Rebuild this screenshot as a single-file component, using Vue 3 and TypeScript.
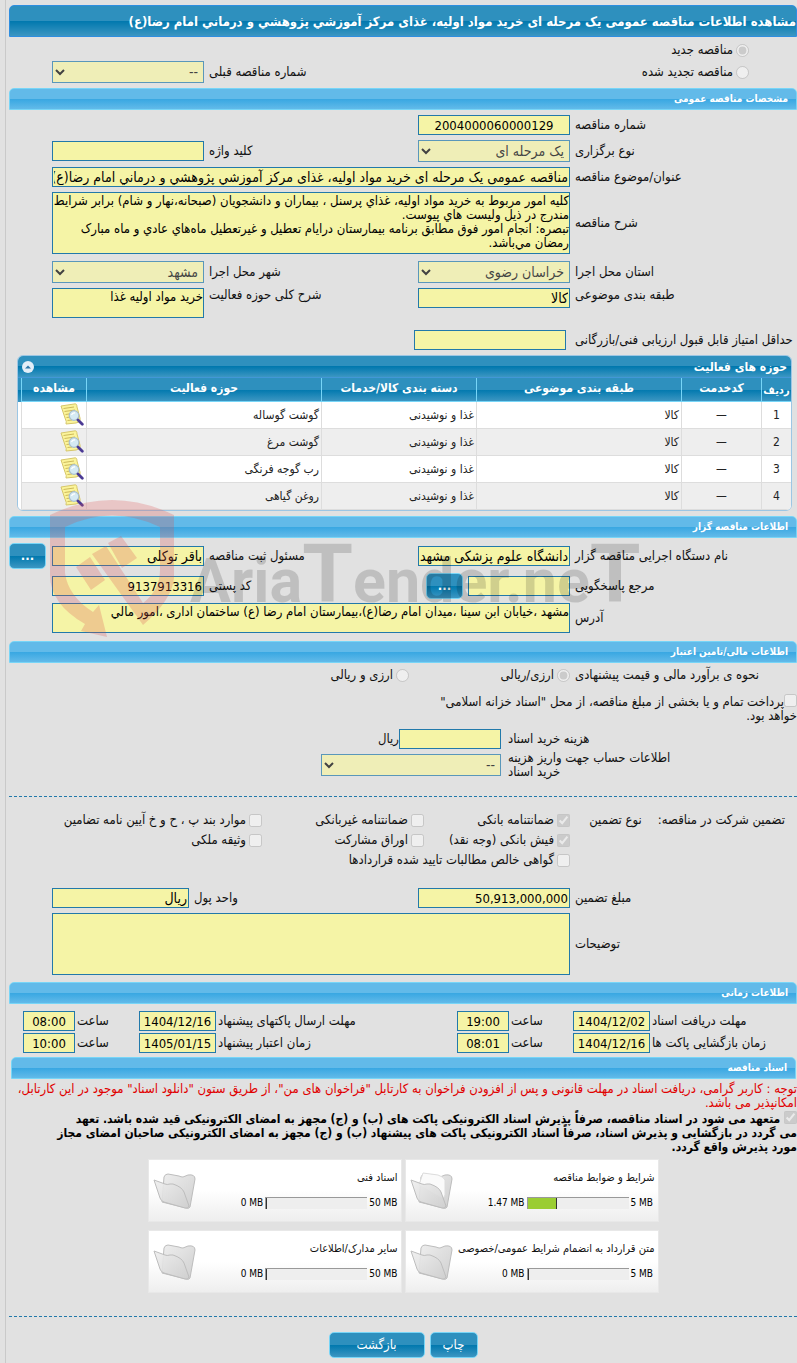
<script setup lang="ts">
interface Activity {
  id: number
  code: string
  subject: string
  category: string
  field: string
}
interface Doc {
  title: string
  used: number
  max: number
  filled: boolean
}
interface Deadline {
  key: string
  label: string
  date: string
  hour: string
}

const title =
  'مشاهده اطلاعات مناقصه عمومی یک مرحله ای خرید مواد اولیه، غذای مرکز آموزشي پژوهشي و درماني امام رضا(ع)'
const subject =
  'مناقصه عمومی یک مرحله ای خرید مواد اولیه، غذای مرکز آموزشي پژوهشي و درماني امام رضا(ع)'
const description = [
  'کلیه امور مربوط به خرید مواد اولیه، غذاي پرسنل ، بیماران و دانشجویان (صبحانه،نهار و شام) برابر شرایط',
  'مندرج در ذیل ولیست هاي پیوست.',
  'تبصره: انجام امور فوق مطابق برنامه بیمارستان درایام تعطیل و غیرتعطیل ماه‌هاي عادي و ماه مبارک',
  'رمضان مي‌باشد.',
].join('\n')
const scope = 'خرید مواد اولیه غذا'
const address =
  'مشهد ،خیابان ابن سینا ،میدان امام رضا(ع)،بیمارستان امام رضا (ع) ساختمان اداری ،امور مالي'

const activities: Activity[] = ['گوشت گوساله', 'گوشت مرغ', 'رب گوجه فرنگی', 'روغن گیاهی'].map(
  (field, i) => ({ id: i + 1, code: '—', subject: 'کالا', category: 'غذا و نوشیدنی', field }),
)

const deadlines: Deadline[] = [
  { key: 'docs', label: 'مهلت دریافت اسناد', date: '1404/12/02', hour: '19:00' },
  { key: 'send', label: 'مهلت ارسال پاکتهای پیشنهاد', date: '1404/12/16', hour: '08:00' },
  { key: 'open', label: 'زمان بازگشایی پاکت ها', date: '1404/12/16', hour: '08:01' },
  { key: 'valid', label: 'زمان اعتبار پیشنهاد', date: '1405/01/15', hour: '10:00' },
]

const docs: Doc[] = [
  { title: 'شرایط و ضوابط مناقصه', used: 1.47, max: 5, filled: true },
  { title: 'اسناد فنی', used: 0, max: 50, filled: false },
  { title: 'متن قرارداد به انضمام شرایط عمومی/خصوصی', used: 0, max: 5, filled: false },
  { title: 'سایر مدارک/اطلاعات', used: 0, max: 50, filled: false },
]
</script>

<template>
  <main class="page" dir="rtl">
    <h1 class="title">{{ title }}</h1>

    <div class="kind">
      <label class="opt kind-opt"><input type="radio" name="kind" checked disabled />مناقصه جدید</label>
      <div class="grid">
        <label class="opt kind-opt span2"><input type="radio" name="kind" disabled />مناقصه تجدید شده</label>
        <label class="lbl" for="prev">شماره مناقصه قبلی</label>
        <select id="prev" disabled><option>--</option></select>
      </div>
    </div>

    <h2 class="section">مشخصات مناقصه عمومی</h2>
    <div class="body">
      <div class="grid">
        <label class="lbl" for="num">شماره مناقصه</label>
        <input id="num" class="num center" type="text" value="2004000060000129" readonly />
      </div>
      <div class="grid">
        <label class="lbl" for="type">نوع برگزاری</label>
        <select id="type" disabled><option>یک مرحله ای</option></select>
        <label class="lbl" for="kw">کلید واژه</label>
        <input id="kw" type="text" readonly />
      </div>
      <div class="grid">
        <label class="lbl" for="subj">عنوان/موضوع مناقصه</label>
        <input id="subj" class="span3" type="text" :value="subject" readonly />
      </div>
      <div class="grid">
        <label class="lbl" for="desc">شرح مناقصه</label>
        <textarea id="desc" class="span3 tall" :value="description" readonly></textarea>
      </div>
      <div class="grid place">
        <label class="lbl" for="prov">استان محل اجرا</label>
        <select id="prov" disabled><option>خراسان رضوی</option></select>
        <label class="lbl" for="city">شهر محل اجرا</label>
        <select id="city" disabled><option>مشهد</option></select>
      </div>
      <div class="grid top">
        <label class="lbl" for="cls">طبقه بندی موضوعی</label>
        <input id="cls" type="text" value="کالا" readonly />
        <label class="lbl" for="act">شرح کلی حوزه فعالیت</label>
        <textarea id="act" class="short" :value="scope" readonly></textarea>
      </div>
      <div class="grid score">
        <label class="lbl" for="score">حداقل امتیاز قابل قبول ارزیابی فنی/بازرگانی</label>
        <div class="score-field"><input id="score" type="text" readonly /></div>
      </div>

      <div class="panel">
        <div class="panel-head">
          <span>حوزه های فعالیت</span>
          <button class="collapse" type="button" aria-label="بستن">
            <svg viewBox="0 0 12 12" width="12" height="12"><circle cx="6" cy="6" r="6" fill="#e3eef8" /><path d="M3 7.5 L6 4.5 L9 7.5 Z" fill="#2d76a8" /></svg>
          </button>
        </div>
        <div class="panel-body">
          <table>
            <colgroup>
              <col class="c1" /><col class="c2" /><col class="c3" /><col class="c4" /><col /><col class="c6" />
            </colgroup>
            <thead>
              <tr>
                <th class="idx">ردیف</th>
                <th>کدخدمت</th>
                <th>طبقه بندی موضوعی</th>
                <th>دسته بندی کالا/خدمات</th>
                <th>حوزه فعالیت</th>
                <th>مشاهده</th>
              </tr>
            </thead>
            <tbody>
              <tr v-for="a in activities" :key="a.id">
                <td class="mid">{{ a.id }}</td>
                <td class="mid">{{ a.code }}</td>
                <td>{{ a.subject }}</td>
                <td>{{ a.category }}</td>
                <td>{{ a.field }}</td>
                <td>
                  <a class="view" href="#" aria-label="مشاهده">
                    <svg viewBox="0 0 24 24" width="24" height="24">
                      <path d="M1 3 L14 1 Q17 0 17 4 L20 15 Q21 19 16 20 L6 21 Q7 19 5 15 Z" fill="#fbf49a" stroke="#d6c66a" stroke-width="1" />
                      <path d="M3.5 5.5 L14 4 M4.5 8.5 L15 7 M5.5 11.5 L12 10.5 M6.5 14.5 L11 14 M7.5 17.5 L12 17" stroke="#cdb95a" stroke-width="1" fill="none" />
                      <circle cx="14" cy="12.5" r="4.8" fill="#d3e9f8" fill-opacity="0.95" stroke="#a9bfce" stroke-width="1.2" />
                      <path d="M11.5 12 Q12.5 9.5 15 10" stroke="#ffffff" stroke-width="1.3" fill="none" />
                      <path d="M18 17 L22.3 21.3" stroke="#4b3a94" stroke-width="2.8" stroke-linecap="round" />
                    </svg>
                  </a>
                </td>
              </tr>
            </tbody>
          </table>
        </div>
      </div>
    </div>

    <h2 class="section owner">اطلاعات مناقصه گزار</h2>
    <div class="owner-body">
      <div class="grid">
        <label class="lbl" for="org">نام دستگاه اجرایی مناقصه گزار</label>
        <input id="org" type="text" value="دانشگاه علوم پزشکی مشهد" readonly />
        <label class="lbl" for="reg">مسئول ثبت مناقصه</label>
        <input id="reg" type="text" value="باقر توکلی" readonly />
        <button class="btn dots" type="button">...</button>
      </div>
      <div class="grid">
        <label class="lbl" for="ref">مرجع پاسخگویی</label>
        <div class="pair">
          <input id="ref" type="text" readonly />
          <button class="btn dots" type="button">...</button>
        </div>
        <label class="lbl" for="zip">کد پستی</label>
        <input id="zip" class="num" type="text" value="9137913316" readonly />
      </div>
      <div class="grid">
        <label class="lbl" for="addr">آدرس</label>
        <textarea id="addr" class="span3 short" :value="address" readonly></textarea>
      </div>
      <div class="mark" aria-hidden="true">
        <svg viewBox="0 0 620 140" width="620" height="140" direction="ltr">
          <path fill="#dc5050" fill-opacity="0.25" d="M0 15 Q62 -15 124 15 V78 Q122 100 93 125 L42 54 L56 46 L93 103 Q110 90 110 70 V27 Q62 4 15 27 V73 Q18 96 43 112 L49 105 L57 137 L31 131 L35 124 Q0 104 0 75 Z" />
          <path fill="#dc5050" fill-opacity="0.25" d="M26 67 L40 57 L55 80 L41 90 Z M58 43 L71 36 L87 58 L72 68 Z" />
          <text x="140" y="102" fill="#000000" fill-opacity="0.15" class="mark-text">Aria<tspan class="mark-t">T</tspan>ender.ne<tspan class="mark-t">T</tspan></text>
        </svg>
      </div>
    </div>

    <h2 class="section">اطلاعات مالی/تامین اعتبار</h2>
    <div class="finance">
      <div class="money">
        <span class="lbl">نحوه ی برآورد مالی و قیمت پیشنهادی</span>
        <label class="opt"><input type="radio" name="cur" checked disabled />ارزی/ریالی</label>
        <label class="opt"><input type="radio" name="cur" disabled />ارزی و ریالی</label>
      </div>
      <label class="treasury"><input type="checkbox" disabled />پرداخت تمام و یا بخشی از مبلغ مناقصه، از محل "اسناد خزانه اسلامی"<br />خواهد بود.</label>
      <div class="cost">
        <label class="lbl" for="price">هزینه خرید اسناد</label>
        <div class="cost-field"><input id="price" type="text" readonly /><span>ریال</span></div>
        <label class="lbl" for="acc">اطلاعات حساب جهت واریز هزینه<br />خرید اسناد</label>
        <select id="acc" disabled><option>--</option></select>
      </div>
    </div>

    <hr />

    <div class="guarantee">
      <div class="g-label"><span>تضمین شرکت در مناقصه:</span><span>نوع تضمین</span></div>
      <div class="g-opts">
        <label class="opt"><input type="checkbox" checked disabled />ضمانتنامه بانکی</label>
        <label class="opt"><input type="checkbox" disabled />ضمانتنامه غیربانکی</label>
        <label class="opt"><input type="checkbox" disabled />موارد بند پ ، ح و خ آیین نامه تضامین</label>
        <label class="opt"><input type="checkbox" checked disabled />فیش بانکی (وجه نقد)</label>
        <label class="opt"><input type="checkbox" disabled />اوراق مشارکت</label>
        <label class="opt"><input type="checkbox" disabled />وثیقه ملکی</label>
        <label class="opt wide"><input type="checkbox" disabled />گواهی خالص مطالبات تایید شده قراردادها</label>
      </div>
    </div>
    <div class="body amounts">
      <div class="grid unit">
        <label class="lbl" for="amt">مبلغ تضمین</label>
        <input id="amt" class="num" type="text" value="50,913,000,000" readonly />
        <label class="lbl" for="unit">واحد پول</label>
        <input id="unit" type="text" value="ریال" readonly />
      </div>
      <div class="grid">
        <label class="lbl" for="notes">توضیحات</label>
        <textarea id="notes" class="span3 tall" readonly></textarea>
      </div>
    </div>

    <h2 class="section">اطلاعات زمانی</h2>
    <div class="times">
      <template v-for="d in deadlines" :key="d.key">
        <label class="lbl" :for="d.key + '-date'">{{ d.label }}</label>
        <input :id="d.key + '-date'" class="num center" type="text" :value="d.date" readonly />
        <label class="lbl" :for="d.key + '-hour'">ساعت</label>
        <input :id="d.key + '-hour'" class="num center" type="text" :value="d.hour" readonly />
      </template>
    </div>

    <h2 class="section files">اسناد مناقصه</h2>
    <p class="warn">
      توجه : کاربر گرامی، دریافت اسناد در مهلت قانونی و پس از افزودن فراخوان به کارتابل "فراخوان های من"، از طریق ستون "دانلود اسناد" موجود در این کارتابل،<br />امکانپذیر می باشد.
    </p>
    <label class="pledge"><input type="checkbox" checked disabled />
      متعهد می شود در اسناد مناقصه، صرفاً پذیرش اسناد الکترونیکی پاکت های (ب) و (ج) مجهز به امضای الکترونیکی قید شده باشد. تعهد<br />می گردد در بازگشایی و پذیرش اسناد، صرفاً اسناد الکترونیکی پاکت های پیشنهاد (ب) و (ج) مجهز به امضای الکترونیکی صاحبان امضای مجاز<br />مورد پذیرش واقع گردد.
    </label>

    <div class="cards">
      <article v-for="d in docs" :key="d.title" class="card">
        <div class="card-info">
          <h3>{{ d.title }}</h3>
          <div class="usage" dir="ltr">
            <span>{{ d.used }} MB</span>
            <div class="meter" role="progressbar" :aria-valuenow="d.used" aria-valuemin="0" :aria-valuemax="d.max">
              <div class="fill" :style="{ width: (d.used / d.max) * 100 + '%' }"></div>
            </div>
            <span class="max">{{ d.max }} MB</span>
          </div>
        </div>
        <svg class="folder" viewBox="0 0 44 40" width="44" height="40">
          <defs>
            <linearGradient id="fold" x1="0" y1="0" x2="1" y2="1">
              <stop offset="0" stop-color="#eeeeee" /><stop offset="1" stop-color="#cfcfcf" />
            </linearGradient>
          </defs>
          <path d="M11 6 Q12 3 15 3 L26 5 Q28 6 30 6 L35 4 Q42 3 42 8 L37 36 Q36 38 33 37 L9 31 Z" fill="url(#fold)" stroke="#bdbdbd" stroke-width="1" />
          <path v-if="d.filled" d="M13 2 L28 4 Q34 6 35 9 L35 24 L33 28 L9 14 Z" fill="#fafafa" stroke="#dcdcdc" stroke-width="1" />
          <path d="M1 9 L12 13 Q14 14 17 13 L20 13 Q29 16 31 21 L36 35 Q35 38 32 37 L11 31 Q8 30 7 27 Z" fill="url(#fold)" fill-opacity="0.9" stroke="#bdbdbd" stroke-width="1" />
        </svg>
      </article>
    </div>

    <hr class="end" />
    <div class="actions">
      <button class="btn print" type="button">چاپ</button>
      <button class="btn back" type="button">بازگشت</button>
    </div>
  </main>
</template>

<style>
body {
  background: #e1e1e1;
}
</style>

<style scoped>
.page {
  display: flex;
  flex-direction: column;
  margin-left: 5px;
  padding: 5px 0 5px 3px;
  border-left: 1px solid #c9c9c9;
  font: 13px/14px 'DejaVu Sans Condensed', 'DejaVu Sans', sans-serif;
  color: #111;
  overflow-x: hidden;
}
*,
*::before {
  box-sizing: border-box;
}
.title {
  margin: 0;
  height: 32px;
  border: 1px solid #2e8ee0;
  border-radius: 5px 5px 0 0;
  background: linear-gradient(#2e90be 50%, #0078ae 50%, #3c96c2);
  color: #fff;
  font-size: 13px;
  line-height: 32px;
  white-space: nowrap;
}
.section {
  margin: 0;
  height: 22px;
  padding: 0 8px;
  border: 1px solid #77d5f7;
  border-radius: 5px 5px 0 0;
  background: linear-gradient(#62bae9 50%, #38a7e2 50%, #62bae9);
  color: #fff;
  font-size: 10px;
  line-height: 20px;
}
.kind {
  padding: 2px 0 5px;
}
.opt {
  display: flex;
  align-items: center;
  gap: 3px;
  white-space: nowrap;
}
input[type='radio'],
input[type='checkbox'] {
  flex: none;
  width: 13px;
  height: 13px;
  margin: 0;
}
.kind-opt {
  height: 22px;
  padding-right: 48px;
}
.span2 {
  grid-column: span 2;
}
.span3 {
  grid-column: span 3;
}
.grid {
  display: grid;
  grid-template-columns: minmax(0, 227fr) 152px minmax(0, 214fr) 152px 43px;
  align-items: center;
}
.lbl {
  padding-left: 5px;
  text-align: left;
  white-space: nowrap;
}
input[type='text'],
select,
textarea {
  display: block;
  width: 100%;
  height: 20px;
  margin: 0;
  padding: 0 1px;
  border: 1px solid #2279aa;
  border-radius: 0;
  background: #f5f4a6;
  color: #000;
  font: 14px/16px 'DejaVu Sans Condensed', 'DejaVu Sans', sans-serif;
  outline: 0;
}
input.num {
  font-size: 13px;
}
select {
  height: 22px;
}
textarea {
  font-size: 13px;
  line-height: 14px;
  padding: 1px 0;
  resize: none;
  overflow: hidden;
  white-space: pre;
}
.center {
  text-align: center;
}
.tall {
  height: 62px;
}
.short {
  height: 30px;
}
.top {
  align-items: start;
}
.body {
  display: flex;
  flex-direction: column;
  gap: 5px;
  padding-top: 5px;
}
.place {
  padding-top: 2px;
}
.score {
  padding-top: 7px;
}
.score-field {
  padding-right: 4px;
}
.score-field input {
  width: 152px;
}
.panel {
  margin: 0 5px 0 8px;
  border: 1px solid #9cc6e4;
  border-radius: 6px;
  background: #fff;
  overflow: hidden;
}
.panel-head {
  display: flex;
  justify-content: space-between;
  align-items: center;
  height: 22px;
  padding: 0 4px;
  border-bottom: 1px solid #4297d7;
  background: linear-gradient(#2e90be 50%, #0078ae 50%, #3c96c2);
  color: #fff;
  font-size: 12px;
  font-weight: bold;
}
.collapse {
  display: flex;
  padding: 0;
  border: 0;
  background: none;
}
.panel-body {
  padding-left: 3px;
  background: linear-gradient(#2e90be 12px, #0078ae 12px, #3c96c2 24px, #fff 24px);
}
table {
  width: 100%;
  table-layout: fixed;
  border-collapse: separate;
  border-spacing: 0;
}
.c1 {
  width: 30px;
}
.c2 {
  width: 80px;
}
.c3 {
  width: 205px;
}
.c4 {
  width: 155px;
}
.c6 {
  width: 65px;
}
th {
  height: 24px;
  padding: 0 0 4px;
  border-left: 1px solid #77d5f7;
  border-bottom: 1px solid #77d5f7;
  background: linear-gradient(#2e90be 50%, #0078ae 50%, #3c96c2);
  color: #fff;
  font-size: 12px;
  line-height: 14px;
}
th.idx {
  padding: 2px 0 0;
  font-size: 11px;
}
td {
  height: 27px;
  padding: 0 2px;
  border-left: 1px solid #ddd;
  border-bottom: 1px solid #ddd;
  background: #fff;
  color: #222;
  font-size: 12px;
  line-height: 14px;
  text-align: right;
}
tr:nth-child(even) td {
  background: #eee;
}
td.mid {
  text-align: center;
}
.view {
  display: flex;
  width: 24px;
}
.owner {
  margin-top: 5px;
}
.owner-body {
  position: relative;
  display: flex;
  flex-direction: column;
  gap: 4px;
  padding: 5px 0 8px;
}
.btn {
  height: 26px;
  padding: 0;
  border: 1px solid #77d5f7;
  border-radius: 5px;
  background: linear-gradient(#2e90be 50%, #0078ae 50%, #3c96c2);
  color: #fff;
  font: 13px/16px 'DejaVu Sans Condensed', 'DejaVu Sans', sans-serif;
}
.dots {
  width: 37px;
  font-weight: bold;
}
.owner-body .grid {
  min-height: 26px;
}
.owner-body .grid > .dots {
  justify-self: end;
}
.pair {
  display: flex;
  align-items: center;
  gap: 5px;
}
.pair input[type='text'] {
  width: 102px;
}
.mark {
  position: absolute;
  left: 41px;
  top: -38px;
  direction: ltr;
  pointer-events: none;
}
.mark-text {
  font: bold 61px Roboto, sans-serif;
}
.mark-t {
  font-size: 82px;
}
.money {
  display: grid;
  grid-template-columns: minmax(0, 227fr) 161px minmax(0, 400fr);
  align-items: center;
  height: 24px;
}
.finance {
  display: flex;
  flex-direction: column;
}
.treasury {
  padding: 7px 0 6px;
}
.treasury input {
  vertical-align: -1px;
}
.cost {
  display: grid;
  grid-template-columns: minmax(0, 296fr) 180px minmax(0, 312fr);
  row-gap: 5px;
  align-items: center;
}
.cost .lbl {
  grid-column: 1;
  justify-self: end;
  padding-left: 7px;
  margin: -3px 0;
  text-align: right;
}
.cost-field {
  display: flex;
  align-items: center;
}
.cost-field input[type='text'] {
  width: 102px;
}
.cost .lbl + select {
  align-self: center;
}
.cost .lbl {
  text-align: left;
}
hr {
  width: 100%;
  height: 0;
  margin: 20px 0 0;
  border: 0;
  border-top: 1px dashed #2279aa;
}
hr.end {
  margin-top: 23px;
}
.guarantee {
  display: grid;
  grid-template-columns: minmax(0, 227fr) minmax(0, 561fr);
  padding-top: 13px;
}
.g-label {
  display: flex;
  gap: 16px;
  padding-right: 12px;
  line-height: 20px;
  white-space: nowrap;
}
.g-opts {
  display: grid;
  grid-template-columns: 146px 162px 1fr;
  grid-auto-rows: 20px;
}
.wide {
  grid-column: span 3;
}
.amounts {
  padding: 18px 0 7px;
}
.unit {
  grid-template-columns: minmax(0, 227fr) 152px minmax(0, 229fr) 137px 43px;
}
.times {
  display: grid;
  grid-template-columns: minmax(0, 147fr) 77px 64px 52px minmax(0, 241fr) 77px 64px 52px;
  gap: 2px 0;
  align-items: center;
  padding: 7px 0 4px 14px;
}
.times .lbl {
  padding-left: 2px;
}
.files {
  margin: 0 1px 0 2px;
}
.warn {
  margin: 0;
  padding-top: 3px;
  color: #e00000;
  white-space: nowrap;
}
.pledge {
  padding-top: 1px;
  font-size: 12px;
  font-weight: bold;
  color: #000;
  white-space: nowrap;
}
.pledge input {
  vertical-align: -1px;
}
.cards {
  display: grid;
  grid-template-columns: 254px 254px;
  justify-content: center;
  gap: 8px 3px;
  padding-top: 5px;
}
.card {
  display: flex;
  justify-content: space-between;
  height: 63px;
  padding: 11px 3px 0 4px;
  border: 1px solid #e8e8e8;
  background: linear-gradient(#fff 50%, #eee);
  font-size: 10px;
}
.card-info {
  display: flex;
  flex-direction: column;
  gap: 11px;
}
.card h3 {
  margin: 0;
  font-size: 11px;
  font-weight: normal;
  line-height: 14px;
  white-space: nowrap;
}
.usage {
  display: flex;
  justify-content: flex-end;
  align-items: center;
  gap: 2px;
  color: #000;
}
.max {
  min-width: 24px;
}
.meter {
  width: 102px;
  height: 12px;
  border-top: 1px solid #999;
  border-left: 1px solid #999;
  background: #eee;
}
.fill {
  height: 11px;
  border-right: 1px solid #333;
  background: #9acd32;
}
.folder {
  flex: none;
  margin-right: -44px;
}
.actions {
  display: flex;
  justify-content: center;
  gap: 5px;
  padding-top: 15px;
}
.print {
  width: 48px;
}
.back {
  width: 96px;
}
</style>
